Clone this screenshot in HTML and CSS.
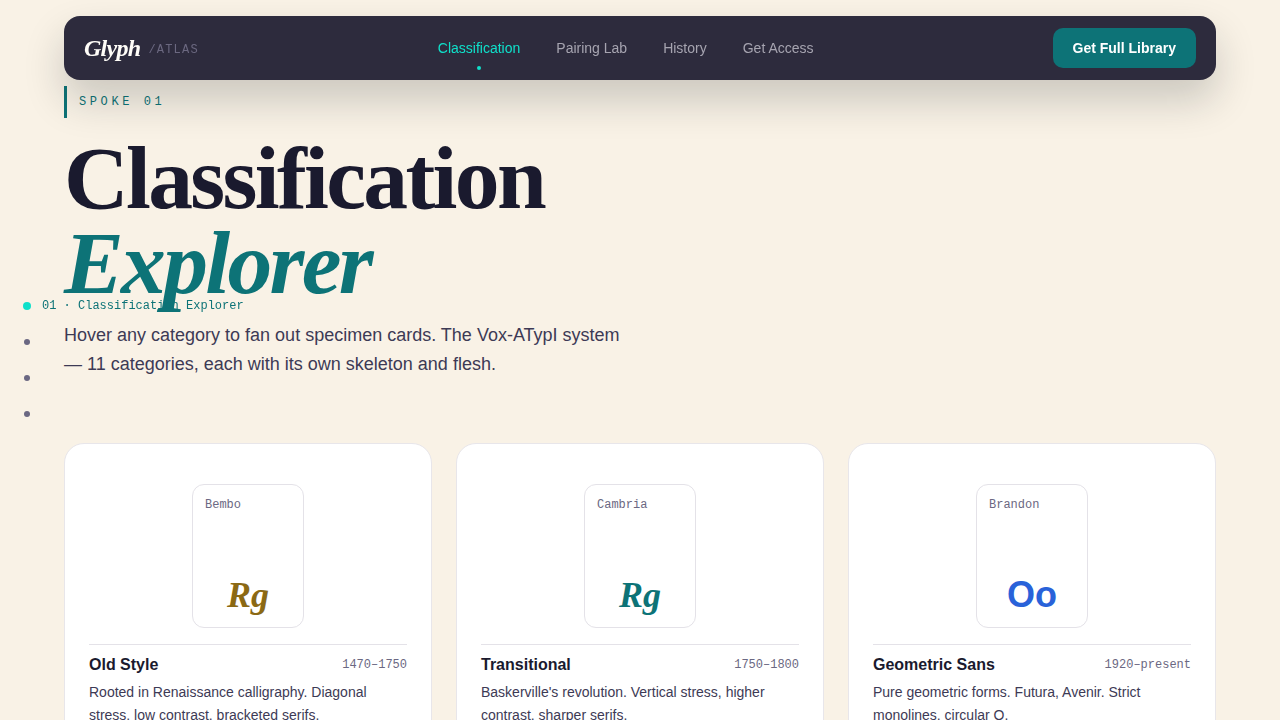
FILE: index.html
```html
<!DOCTYPE html>
<html lang="en">
<head>
    <meta charset="UTF-8">
    <meta name="viewport" content="width=device-width, initial-scale=1.0">
    <title>Glyph Atlas</title>
    <link rel="stylesheet" href="styles.css">
</head>
<body>
    <header class="nav">
        <a class="brand" href="#"><span class="brand-name">Glyph</span><span class="brand-sub">/ATLAS</span></a>
        <nav class="nav-links">
            <a class="active" href="#classification">Classification</a>
            <a href="#pairing">Pairing Lab</a>
            <a href="#history">History</a>
            <a href="#access">Get Access</a>
        </nav>
        <button class="nav-cta" type="button">Get Full Library</button>
    </header>

    <!-- section progress rail -->
    <nav class="rail" aria-label="Sections">
        <a class="rail-item active" href="#classification"><span class="dot"></span><span class="rail-label">01 · Classification Explorer</span></a>
        <a class="rail-item" href="#pairing"><span class="dot"></span></a>
        <a class="rail-item" href="#history"><span class="dot"></span></a>
        <a class="rail-item" href="#access"><span class="dot"></span></a>
    </nav>

    <main class="section" id="classification">
        <div class="eyebrow">SPOKE 01</div>
        <h1>Classification<br><em>Explorer</em></h1>
        <p class="lead">Hover any category to fan out specimen cards. The Vox-ATypI system — 11 categories, each with its own skeleton and flesh.</p>

        <div class="grid">
            <article class="card">
                <div class="fan">
                    <div class="specimen">
                        <span class="specimen-name">Bembo</span>
                        <span class="glyph gold">Rg</span>
                    </div>
                </div>
                <div class="card-head">
                    <h2>Old Style</h2>
                    <span class="years">1470–1750</span>
                </div>
                <p class="desc">Rooted in Renaissance calligraphy. Diagonal stress, low contrast, bracketed serifs.</p>
            </article>
            <article class="card">
                <div class="fan">
                    <div class="specimen">
                        <span class="specimen-name">Cambria</span>
                        <span class="glyph teal">Rg</span>
                    </div>
                </div>
                <div class="card-head">
                    <h2>Transitional</h2>
                    <span class="years">1750–1800</span>
                </div>
                <p class="desc">Baskerville's revolution. Vertical stress, higher contrast, sharper serifs.</p>
            </article>
            <article class="card">
                <div class="fan">
                    <div class="specimen">
                        <span class="specimen-name">Brandon</span>
                        <span class="glyph blue">Oo</span>
                    </div>
                </div>
                <div class="card-head">
                    <h2>Geometric Sans</h2>
                    <span class="years">1920–present</span>
                </div>
                <p class="desc">Pure geometric forms. Futura, Avenir. Strict monolines, circular O.</p>
            </article>
        </div>
    </main>
</body>
</html>
```
FILE: styles.css
```css
:root {
    --paper: #f9f2e6;
    --ink: #1a1a2e;
    --text: #3d3a55;
    --muted: #6b6882;
    --nav: #2d2b3d;
    --teal: #0d7377;
    --cyan: #0fe0ca;
    --serif: "Liberation Serif", serif;
    --sans: "Liberation Sans", sans-serif;
    --mono: "Liberation Mono", monospace;
}
* {
    box-sizing: border-box;
    margin: 0;
    padding: 0;
}
html {
    scrollbar-width: none;
}
body {
    background: var(--paper);
    color: var(--ink);
    font-family: var(--sans);
}
a {
    text-decoration: none;
}

/* top bar */
.nav {
    position: fixed;
    top: 16px;
    left: 64px;
    right: 64px;
    z-index: 10;
    display: flex;
    align-items: center;
    justify-content: space-between;
    padding: 12px 20px;
    background: var(--nav);
    border-radius: 16px;
    box-shadow: 0 20px 40px rgba(20, 32, 36, 0.2);
}
.brand {
    display: flex;
    align-items: center;
    gap: 8px;
}
.brand-name {
    font-family: var(--serif);
    font-size: 24px;
    font-weight: bold;
    font-style: italic;
    letter-spacing: -0.03em;
    color: #fffdf8;
}
.brand-sub {
    padding-top: 3px;
    font-family: var(--mono);
    font-size: 12px;
    line-height: 16px;
    letter-spacing: 0.1em;
    color: #6b6880;
}
.nav-links {
    display: flex;
    gap: 36px;
}
.nav-links a {
    position: relative;
    font-size: 14px;
    color: #a6a4b0;
}
.nav-links a.active {
    color: var(--cyan);
}
.nav-links a.active::after {
    content: "";
    position: absolute;
    left: 50%;
    bottom: -14px;
    width: 4px;
    height: 4px;
    margin-left: -2px;
    border-radius: 50%;
    background: var(--cyan);
}
.nav-cta {
    height: 40px;
    padding: 0 20px;
    border: none;
    border-radius: 10px;
    background: var(--teal);
    color: #fff;
    font-family: var(--sans);
    font-size: 14px;
    font-weight: bold;
    cursor: pointer;
}

/* side rail */
.rail {
    position: fixed;
    left: 23px;
    top: 50%;
    transform: translateY(-50%);
    display: flex;
    flex-direction: column;
    gap: 22px;
}
.rail-item {
    display: flex;
    align-items: center;
    gap: 11px;
    height: 14px;
}
.dot {
    width: 6px;
    height: 6px;
    margin: 0 1px;
    border-radius: 50%;
    background: var(--muted);
}
.rail-item.active .dot {
    width: 8px;
    height: 8px;
    margin: 0;
    background: var(--cyan);
}
.rail-label {
    font-family: var(--mono);
    font-size: 12px;
    color: var(--teal);
}

/* section */
.section {
    padding: 86px 64px 80px;
}
.eyebrow {
    height: 32px;
    padding-left: 12px;
    border-left: 3px solid var(--teal);
    font-family: var(--mono);
    font-size: 12px;
    line-height: 32px;
    letter-spacing: 0.3em;
    color: var(--teal);
}
h1 {
    margin-top: 17px;
    font-family: var(--serif);
    font-size: clamp(48px, 7vw, 112px);
    line-height: 0.95;
    letter-spacing: -0.03em;
}
h1 em {
    color: var(--teal);
}
.lead {
    max-width: 560px;
    margin: 16px 0 64px;
    font-size: 18px;
    line-height: 29px;
    color: var(--text);
}
.grid {
    display: grid;
    grid-template-columns: repeat(3, 1fr);
    gap: 24px;
}
.card {
    padding: 24px;
    background: #fff;
    border: 1px solid #e8e6ea;
    border-radius: 20px;
}
.fan {
    display: flex;
    align-items: center;
    justify-content: center;
    height: 176px;
}
.specimen {
    display: flex;
    flex-direction: column;
    justify-content: space-between;
    width: 112px;
    height: 144px;
    padding: 12px;
    background: #fff;
    border: 1px solid #e4e2e8;
    border-radius: 12px;
}
.specimen-name,
.years {
    font-family: var(--mono);
    font-size: 12px;
    line-height: 16px;
    color: var(--muted);
}
.glyph {
    font-family: var(--serif);
    font-size: 36px;
    font-weight: bold;
    font-style: italic;
    line-height: 40px;
    text-align: center;
}
.gold {
    color: #8b6914;
}
.teal {
    color: var(--teal);
}
.blue {
    font-family: var(--sans);
    font-style: normal;
    color: #2962d9;
}
.card-head {
    display: flex;
    align-items: center;
    justify-content: space-between;
    padding-top: 8px;
    border-top: 1px solid #e4e2e8;
}
.card-head h2 {
    font-size: 16px;
    line-height: 24px;
}
.desc {
    margin-top: 4px;
    font-size: 14px;
    line-height: 23px;
    color: var(--text);
}
```
